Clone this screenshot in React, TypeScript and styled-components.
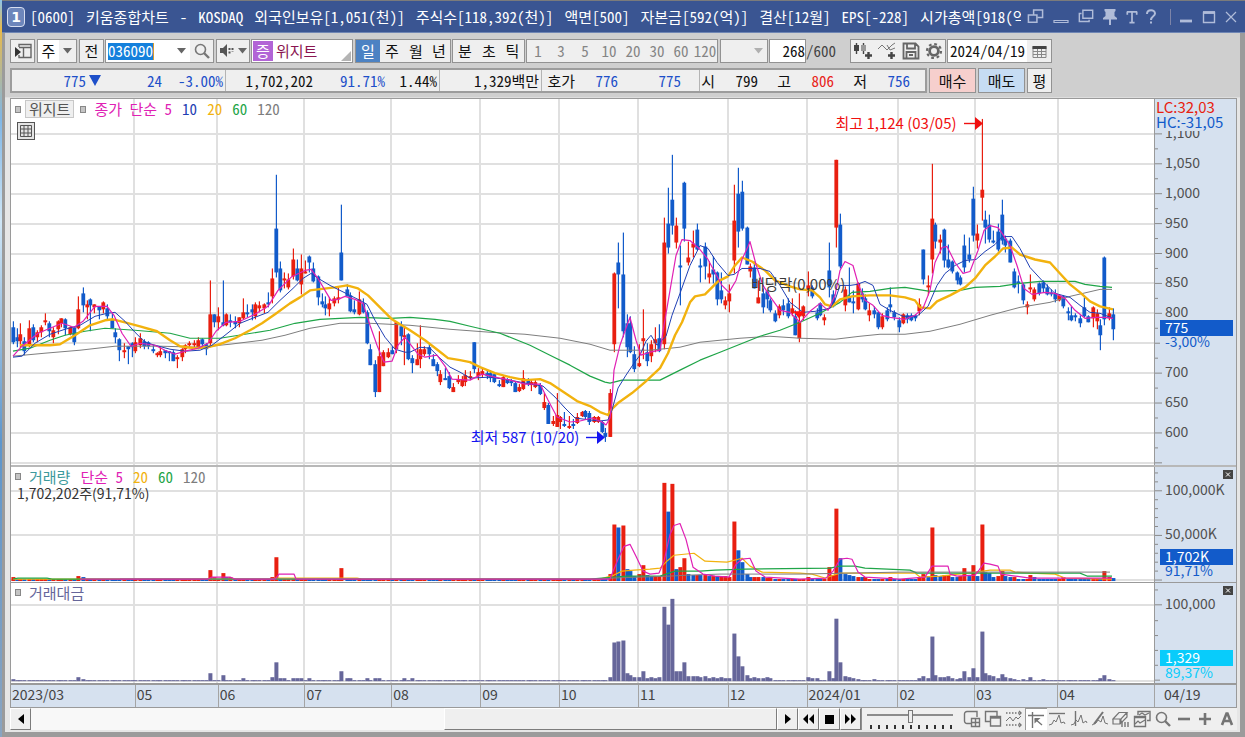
import React from "react";
import styled, { createGlobalStyle, css } from "styled-components";

const SANS = `"Noto Sans CJK KR", sans-serif`;
const MONO = `"Noto Sans Mono CJK KR", "Noto Sans CJK KR", monospace`;

const c = {
  up: "#e81f10",
  down: "#125bca",
  ma5: "#e020b4",
  ma10: "#1f3fb4",
  ma20: "#f2b20e",
  ma60: "#1fa548",
  ma120: "#7d7d7d",
  amount: "#66669a",
  axis: "#d6e1ef",
  line: "#9a9a9a",
  grid: "#e0e0e0",
};

const Global = createGlobalStyle`
  * { box-sizing: border-box; }
  html, body, #root { margin: 0; height: 100%; }
  body { background: #9b9b9b; font: 15px/20px ${MONO}; color: #111; }
  button, input { font: inherit; color: inherit; margin: 0; padding: 0; border-radius: 0; }
`;

/* ---------- window frame ---------- */

const Window = styled.div`
  min-height: 100vh;
  display: flex;
  flex-direction: column;
  padding-left: 2px;
  background: linear-gradient(#8ec4ea, #e9b949 4%, #7fb6e6 16%, #cfe6f6 30%, #5e96cc 60%, #8aa4c0);
`;

const Frame = styled.div`
  flex: 1;
  display: flex;
  flex-direction: column;
  border-top: 1px solid #7b7b7b;
  background: #9b9b9b;
`;

const TitleBar = styled.header`
  display: flex;
  align-items: center;
  height: 32px;
  padding: 0 4px 0 5px;
  background: #3a5592;
  color: #fff;
  border-bottom: 1px solid #6f86b4;
`;

const WindowNumber = styled.span`
  flex: none;
  width: 18px;
  height: 20px;
  margin-right: 5px;
  border: 1px solid #d7def0;
  border-radius: 4px;
  background: #6d86bb;
  font: bold 14px/18px "DejaVu Sans", sans-serif;
  text-align: center;
`;

const TitleText = styled.h1`
  flex: 1 1 0;
  display: flex;
  gap: 11px;
  margin: 0;
  overflow: hidden;
  white-space: nowrap;
  font: 15px/24px ${MONO};
`;

const TitleField = styled.span`
  flex: none;
`;

const TitleButtons = styled.div`
  flex: none;
  display: flex;
  align-items: center;
  margin-left: 6px;
`;

const TitleButton = styled.button<{ $w: number }>`
  display: flex;
  align-items: center;
  justify-content: center;
  width: ${(p) => p.$w}px;
  height: 24px;
  border: 0;
  background: none;
  color: #b0bcd9;
`;

const TitleDivider = styled.span`
  width: 1px;
  height: 16px;
  margin: 0 4px 0 6px;
  background: #7d84a8;
`;

const Body = styled.main`
  flex: 1;
  display: flex;
  flex-direction: column;
  margin: 0 5px 5px 3px;
  padding: 0 3px 2px 5px;
  background: #e6e6e6;
`;

const Controls = styled.div`
  margin: 0 -3px 0 -5px;
  padding: 6px 3px 4px 5px;
  background: #cfcfcf;
  border-bottom: 1px solid #dedede;
`;

/* ---------- toolbar ---------- */

const Toolbar = styled.div`
  display: flex;
  height: 24px;
  margin-bottom: 5px;
`;

const Group = styled.div<{ $gap?: number }>`
  flex: none;
  display: flex;
  margin-right: ${(p) => p.$gap ?? 2}px;
  border: 1px solid #929292;
  background: #efefef;

  & > * + * { border-left: 1px solid #929292; }
`;

const Tool = styled.button<{ $w?: number; $on?: boolean; $white?: boolean }>`
  display: flex;
  align-items: center;
  justify-content: center;
  width: ${(p) => p.$w ?? 24}px;
  border: 0;
  overflow: hidden;
  white-space: nowrap;
  background: ${(p) => (p.$on ? "#4c82c3" : p.$white ? "#fff" : "#efefef")};
  color: ${(p) => (p.$on ? "#fff" : "#111")};

  &:disabled { color: #858585; }
`;

const Field = styled.input<{ $w: number; $align?: string }>`
  width: ${(p) => p.$w}px;
  border: 0;
  outline: 0;
  background: #fff;
  text-align: ${(p) => p.$align ?? "left"};
`;

const CodeBox = styled.label`
  display: flex;
  align-items: center;
  width: 66px;
  padding-left: 2px;
  background: #fff;
`;

const CodeField = styled.input`
  width: 46px;
  height: 17px;
  border: 0;
  outline: 0;
  border-right: 1px solid #d99a2b;
  background: #1480dc;
  color: #fff;
`;

const StockName = styled.div`
  position: relative;
  display: flex;
  align-items: center;
  width: 100px;
  padding-left: 1px;
  background: #fff;
  color: #8a1550;

  &::after {
    content: "";
    position: absolute;
    right: 1px;
    bottom: 1px;
    border: 5px solid;
    border-color: transparent #b4b4b4 #b4b4b4 transparent;
  }
`;

const Badge = styled.span`
  width: 20px;
  margin-right: 3px;
  background: #b264d6;
  color: #fff;
  text-align: center;
`;

const EmptyCell = styled.span`
  width: 29px;
`;

const CountTotal = styled.span`
  width: 44px;
  margin-left: -2px;
  line-height: 24px;
  color: #444;
`;

/* ---------- quote row ---------- */

const QuoteRow = styled.div`
  display: flex;
  height: 25px;
`;

const QuoteBar = styled.div`
  display: flex;
  margin-right: 2px;
  border: 2px solid #9c9c9c;
  background: #efefef;
`;

const QuoteCell = styled.div<{ $w: number }>`
  display: flex;
  align-items: center;
  width: ${(p) => p.$w}px;
  padding-right: 2px;

  & + & { border-left: 1px solid #b4b4b4; }
`;

const Num = styled.span<{ $w: number; $tone?: "down" | "up" }>`
  flex: none;
  width: ${(p) => p.$w}px;
  text-align: right;
  white-space: nowrap;
  color: ${(p) => (p.$tone === "down" ? "#1d4fc9" : p.$tone === "up" ? "#e8241a" : "#111")};
`;

const DownMark = styled.span`
  width: 0;
  margin-left: 3px;
  border: 6px solid transparent;
  border-top: 11px solid #1d4fc9;
  border-bottom: 0;
`;

const OrderButton = styled.button<{ $w: number; $bg?: string }>`
  width: ${(p) => p.$w}px;
  margin-right: 2px;
  border: 1px solid #929292;
  background: ${(p) => p.$bg ?? "#efefef"};
`;

/* ---------- chart ---------- */

const Chart = styled.section`
  flex: 1;
  display: flex;
  flex-direction: column;
  border: 1px solid ${c.line};
  background: #fff;
`;

const Panel = styled.div<{ $grow: number }>`
  flex: ${(p) => p.$grow} 1 0;
  display: flex;
  border-bottom: ${(p) => (p.$grow > 300 ? 2 : 1)}px solid ${(p) => (p.$grow > 300 ? "#b8b8b8" : c.line)};
`;

const Plot = styled.div`
  position: relative;
  flex: 1;

  & > svg { position: absolute; inset: 0; width: 100%; height: 100%; }
`;

const Axis = styled.div`
  position: relative;
  flex: none;
  width: 82px;
  border-left: 1px solid ${c.line};
  background: ${c.axis};

  & > svg { position: absolute; inset: 0; width: 100%; height: 100%; }
`;

const Legend = styled.div`
  position: absolute;
  left: 4px;
  top: 0;
  display: flex;
  align-items: center;
  height: 20px;
`;

const Marker = styled.span`
  width: 6px;
  height: 7px;
  margin: 0 8px 0 0;
  border: 1px solid #888;
  background: #c4c4c4;
`;

const Item = styled.span<{ $color: string; $gap?: number }>`
  margin-right: ${(p) => p.$gap ?? 10}px;
  color: ${(p) => p.$color};
  white-space: nowrap;
`;

const NameButton = styled.button`
  height: 18px;
  margin: 0 6px 0 -4px;
  padding: 0 3px;
  border: 1px solid #c8c8c8;
  background: #efefef;
  color: #555;
  line-height: 16px;
`;

const TableButton = styled.button`
  position: absolute;
  left: 6px;
  top: 23px;
  width: 18px;
  height: 18px;
  border: 1px solid #555;
  background: #e4e4e4;
  display: flex;
  align-items: center;
  justify-content: center;
`;

const Note = styled.div<{ $x: number; $y: number; $color: string }>`
  position: absolute;
  right: ${(p) => 100 - p.$x}%;
  top: ${(p) => p.$y}%;
  display: flex;
  align-items: center;
  gap: 6px;
  height: 18px;
  margin-top: -11px;
  white-space: nowrap;
  font: 15px/18px ${SANS};
  color: ${(p) => p.$color};
`;

const SubNote = styled.div`
  position: absolute;
  left: 6px;
  top: 17px;
  font: 14px/18px ${SANS};
  color: #333;
`;

const Limits = styled.div`
  position: absolute;
  left: 1px;
  right: 0;
  top: 0;
  height: 32px;
  background: ${c.axis};
  font: 15px/15px ${SANS};
`;

const Tag = styled.div<{ $y: number; $bg: string; $ink: string }>`
  position: absolute;
  left: 5px;
  right: 3px;
  top: ${(p) => p.$y}%;
  height: 16px;
  padding-left: 5px;
  background: ${(p) => p.$bg};
  color: ${(p) => p.$ink};
  font: 14px/15px ${SANS};
`;

const CloseBox = styled.button`
  position: absolute;
  right: 3px;
  top: 3px;
  width: 10px;
  height: 9px;
  display: flex;
  border: 0;
  background: #444;
`;

const Limit = styled.div<{ $color: string }>`
  color: ${(p) => p.$color};
`;

const Dates = styled.div`
  display: grid;
  grid-template-columns: 124fr 83fr 87fr 87fr 89fr 79fr 79fr 90fr 79fr 91fr 77fr 83fr 97fr 82px;
  height: 23px;
  background: ${c.axis};
  border-top: 1px solid ${c.line};
`;

const DateCell = styled.span<{ $last?: boolean }>`
  min-width: 0;
  padding-left: ${(p) => (p.$last ? 9 : 1)}px;
  font: 14px/19px ${SANS};
  color: #444;
  white-space: nowrap;

  & + & { border-left: 1px solid #a4a4a4; }
`;

/* ---------- bottom bar ---------- */

const Bottom = styled.footer`
  display: flex;
  align-items: stretch;
  height: 22px;
  background: #efefef;
`;

const raised = css`
  border: 1px solid;
  border-color: #fff #7c7c7c #7c7c7c #fff;
  box-shadow: 1px 0 0 #8f8f8f;
  background: #efefef;
`;

const Step = styled.button`
  flex: none;
  width: 21px;
  ${raised}
  display: flex;
  align-items: center;
  justify-content: center;
`;

const Track = styled.div`
  flex: 413 1 0;
  background: #f8f8f8;
`;

const Thumb = styled.div`
  flex: 332 1 0;
  ${raised}
`;

const Zoom = styled.input`
  flex: none;
  width: 86px;
  height: 22px;
  margin: 0 8px 0 6px;
  appearance: none;
  background:
    linear-gradient(#8c8c8c, #8c8c8c) 0 6px / 100% 2px no-repeat,
    repeating-linear-gradient(90deg, transparent 0 3px, #333 3px 5px, transparent 5px 8px) 0 17px / 100% 4px no-repeat;

  &::-webkit-slider-thumb {
    appearance: none;
    width: 5px;
    height: 13px;
    margin-top: -6px;
    border: 1px solid #777;
    background: #efefef;
  }
`;

const Icons = styled.div`
  flex: 276 0 0;
  max-width: 277px;
  display: flex;
`;

const IconButton = styled.button<{ $on?: boolean }>`
  flex: 1;
  display: flex;
  align-items: center;
  justify-content: center;
  border: ${(p) => (p.$on ? "1px solid #9a9a9a" : "0")};
  border-width: ${(p) => (p.$on ? "1px 0 0 1px" : "0")};
  background: ${(p) => (p.$on ? "#fff" : "none")};
  color: #747474;
`;

/* ---------- data: x, high, body top, body bottom, low, direction ---------- */

const CANDLES = `
13 321 327 342 344 b|17 328 337 341 347 b|20 323 334 341 348 r|24 337 341 351 355 b|29 320 328 345 347 r|33 324 327 340 342 b|37 330 332 337 342 r|41 325 327 332 337 r|45 313 320 322 325 r|49 321 323 331 337 b|53 327 330 337 343 r|58 320 321 329 334 r|61 318 318 323 327 r|65 318 319 328 335 b|70 326 327 334 335 r|74 326 327 342 345 b|78 296 309 328 329 r|83 287 293 305 312 b|87 300 304 307 319 r|90 298 299 305 331 b|94 304 304 307 313 r|99 306 306 310 319 b|103 301 302 309 313 r|107 304 308 316 319 b|112 313 319 328 328 b|115 328 332 337 343 b|119 338 339 350 361 b|124 343 350 352 358 r|128 346 346 349 364 b|132 342 343 347 357 b|135 337 342 351 353 r|140 333 338 345 348 r|144 339 341 346 349 b|148 341 342 346 349 b|153 345 349 351 353 b|157 352 353 355 357 r|160 347 351 355 357 r|165 350 350 353 358 b|169 351 351 353 361 b|173 350 352 361 361 b|177 355 357 359 368 r|182 348 349 357 361 r|185 344 345 349 353 r|189 341 343 345 348 r|194 340 343 345 349 r|198 337 340 347 349 r|202 338 339 344 347 b|206 343 344 349 355 b|210 280 314 343 347 r|214 314 314 322 327 b|218 307 316 322 330 r|223 280 322 325 326 b|226 313 314 325 326 r|230 314 320 322 327 b|235 316 321 324 328 b|239 317 317 323 327 r|243 298 312 318 319 r|247 304 312 314 317 b|252 304 309 312 320 b|255 302 304 316 319 r|259 301 305 308 312 r|264 303 304 308 313 r|268 292 302 304 307 b|272 268 278 296 303 r|276 174 228 272 277 b|280 261 268 290 292 b|284 272 278 280 288 r|288 273 279 287 289 r|293 248 259 276 279 r|297 259 268 280 281 b|301 254 268 284 294 r|305 260 271 273 273 r|309 255 256 262 272 b|313 262 268 281 282 b|318 275 276 297 305 b|322 293 301 304 307 b|325 296 304 308 315 b|329 297 303 309 316 r|334 296 298 303 306 r|338 287 297 299 303 r|341 204 252 280 280 b|347 284 289 296 296 b|350 292 295 311 312 b|354 300 309 312 314 b|359 291 299 314 315 r|363 298 303 312 313 b|367 310 312 343 344 b|370 344 349 365 365 b|375 360 364 392 397 b|379 331 356 392 392 r|383 350 352 366 366 r|388 348 352 357 358 r|392 346 350 354 354 b|396 322 322 349 353 r|401 321 326 336 345 b|404 326 335 337 365 r|408 333 334 359 360 b|412 355 358 363 373 b|417 343 359 365 365 r|420 325 349 359 368 r|424 346 349 354 356 r|429 344 347 354 359 b|433 354 359 366 366 b|437 362 364 371 376 b|440 370 374 382 385 r|445 368 378 379 380 b|449 372 376 388 389 b|453 383 387 392 392 r|458 375 379 382 384 r|462 376 379 386 387 r|465 370 375 382 386 r|470 371 376 378 380 r|474 342 342 369 373 b|478 368 372 376 380 r|482 367 371 374 377 r|487 369 373 376 379 b|490 370 373 378 382 b|494 372 374 382 383 b|499 380 384 386 387 b|503 375 377 387 387 r|507 378 379 383 384 b|511 379 381 383 386 b|515 381 383 392 392 b|519 384 387 391 392 r|523 370 378 389 390 r|528 378 379 384 386 b|531 380 382 385 391 r|535 380 382 387 388 r|540 383 385 394 395 b|544 393 402 408 410 r|548 403 405 424 424 b|553 416 421 424 426 r|557 393 415 427 427 r|560 416 417 422 429 r|564 412 424 426 427 b|569 416 426 428 429 r|573 419 424 426 429 b|577 413 417 423 424 r|582 411 412 416 417 r|585 410 411 417 420 b|589 411 413 422 425 b|594 416 417 422 423 r|598 416 417 422 423 r|602 421 422 432 433 b|605 428 433 437 442 b|610 389 393 437 437 r|614 272 273 344 352 r|618 242 262 274 308 b|623 232 274 331 337 b|627 314 323 347 357 b|630 316 323 352 353 b|634 346 354 369 372 b|639 344 363 366 367 r|643 309 338 341 359 r|647 343 352 361 366 b|651 340 344 356 362 r|655 327 339 343 352 r|659 324 338 351 352 b|664 217 242 344 349 r|668 187 223 247 253 b|672 154 199 225 234 b|676 217 225 242 248 r|680 245 265 267 305 b|684 181 182 228 241 b|688 241 257 262 265 r|693 230 243 247 257 r|697 223 229 249 250 b|700 258 265 267 282 b|705 242 246 266 279 b|709 261 273 277 283 r|713 256 269 274 283 b|717 271 272 299 305 b|721 272 290 299 303 b|725 296 300 305 309 r|729 284 293 301 312 r|734 184 220 260 273 r|738 167 193 231 247 b|742 180 191 228 230 b|747 226 227 264 264 b|750 263 266 271 277 r|754 261 267 288 288 b|758 280 297 303 303 r|763 288 293 307 313 b|767 290 291 299 308 b|770 298 300 310 312 b|775 310 313 321 322 b|779 304 306 315 318 r|783 299 305 310 315 b|788 298 303 316 318 b|792 298 308 313 316 r|795 310 316 335 335 b|799 293 321 338 342 r|803 305 306 316 320 r|808 271 285 290 296 r|812 285 287 296 298 b|817 308 312 318 320 b|820 302 303 315 316 b|824 314 317 320 325 r|829 242 270 287 297 b|833 290 294 306 307 b|836 159 159 227 247 r|840 213 224 266 268 b|845 286 289 305 311 r|849 267 297 302 302 b|853 290 301 303 313 b|858 282 283 309 310 r|862 288 293 299 302 b|865 294 298 309 310 b|869 303 310 315 321 r|874 306 310 314 318 b|878 311 312 327 329 b|882 313 316 327 329 r|887 307 310 319 321 b|890 287 304 307 312 b|894 310 312 317 320 b|899 317 320 327 332 b|903 313 314 323 324 r|907 313 315 319 323 b|911 313 315 320 321 b|915 314 315 318 321 b|919 298 304 311 315 r|923 249 249 279 284 b|928 275 285 287 295 r|932 163 218 259 273 r|935 222 224 241 248 b|940 234 239 242 253 r|944 228 229 260 267 b|948 244 259 267 268 b|952 260 261 271 273 b|957 271 272 280 284 b|960 275 277 284 285 b|964 234 245 267 272 b|969 237 254 259 262 b|973 186 198 235 241 b|977 224 233 240 248 r|982 118 189 197 220 r|985 210 219 227 243 b|989 214 224 239 242 b|993 230 240 242 243 b|998 223 231 249 251 b|1002 199 214 240 244 b|1005 235 238 245 252 b|1010 238 240 262 262 b|1014 268 271 287 288 b|1018 275 281 283 293 b|1023 283 284 300 304 b|1027 301 304 307 314 r|1030 274 287 289 292 r|1034 287 289 299 301 r|1039 282 283 293 295 b|1043 280 282 288 292 b|1047 284 287 294 295 b|1051 289 292 294 296 b|1055 289 293 299 302 b|1059 294 295 300 301 r|1063 295 296 306 308 b|1068 307 311 313 320 b|1071 306 315 320 321 b|1075 313 315 317 321 b|1080 315 318 323 327 b|1084 297 307 316 317 b|1088 315 316 322 322 b|1093 306 307 318 327 r|1097 309 313 321 329 r|1100 319 325 335 350 b|1104 256 257 319 325 b|1109 307 313 318 320 r|1113 308 314 329 340 b`
  .trim()
  .split("|")
  .map((row) => {
    const [x, high, top, bottom, low, dir] = row.trim().split(" ");
    return { x: +x, high: +high, top: +top, bottom: +bottom, low: +low, color: dir === "r" ? c.up : c.down };
  });

const table = (text: string) =>
  Object.fromEntries(
    text.split(" ").map((pair) => {
      const [x, rest] = pair.split(":");
      return [x, rest];
    }),
  ) as Record<string, string>;

/* x:top of each volume bar, with its direction */
const VOLUME = table(
  "13:578r 78:577r 83:578b 210:571r 214:578r 223:574r 226:578b 230:578r 272:578r 276:558r 341:569r 610:575r 614:525r 618:528b 623:526r 627:570b 630:572b 634:577b 639:575r 643:566r 647:576b 651:577b 655:577r 659:577r 664:483r 668:512b 672:484r 676:570b 680:568r 684:559r 688:575b 693:576b 697:576r 700:576b 705:576r 709:577b 713:577r 717:577b 721:577r 725:577r 729:578r 734:522r 738:551b 742:563b 747:575b 750:578b 754:578r 758:578r 763:578b 767:579r 770:579r 808:578r 829:568r 833:576r 836:509r 840:559b 845:575b 849:576b 853:577b 858:578r 862:578b 865:578r 890:578r 919:578r 923:575r 928:577b 932:528r 935:576b 940:577b 944:576r 948:576r 952:578b 957:578b 960:577r 964:569r 969:577b 973:566r 977:577b 982:525r 985:573b 989:574b 993:578b 998:577r 1002:572r 1005:577b 1010:578b 1014:578r 1030:576r 1034:578b 1063:578r 1104:572r 1109:578r 1113:579b",
);

const AMOUNT = table(
  "13:681 78:679 83:681 210:675 223:677 243:680 272:679 276:664 280:680 284:680 293:680 297:680 301:680 309:680 341:673 347:680 350:680 367:680 375:680 379:680 404:680 412:680 610:679 614:644 618:643 623:642 627:675 630:677 634:679 639:679 643:673 647:680 651:679 655:680 659:679 664:608 668:626 672:600 676:673 680:673 684:664 688:678 693:678 697:678 700:679 705:678 709:680 713:679 717:680 721:679 725:680 729:680 734:635 738:658 742:668 747:677 750:680 754:679 758:680 763:680 767:679 770:680 808:679 812:680 817:680 829:673 833:680 836:620 840:664 845:678 849:679 853:680 858:681 874:681 919:680 923:678 928:680 932:638 935:677 940:679 944:679 948:678 952:680 957:681 960:680 964:673 969:679 973:670 977:679 982:633 985:675 989:677 993:678 998:680 1002:676 1005:679 1010:680 1014:681 1023:681 1030:679 1043:681 1100:680 1104:677 1109:681",
);

const MA = {
  ma5: "13,356 22,346 38,333 50,328 62,323 74,327 83,321 95,306 107,306 114,315 122,333 131,346 140,343 155,345 165,350 175,354 185,351 198,348 208,343 216,331 226,322 240,321 255,314 268,306 278,290 292,276 305,270 311,269 318,278 325,290 331,300 338,299 345,296 355,299 363,303 370,325 377,345 384,362 392,361 398,345 405,337 411,345 418,354 425,357 437,355 445,366 452,379 470,380 482,374 495,377 510,380 525,384 540,384 548,400 557,417 570,422 580,421 592,418 602,422 606,425 610,418 612,400 614,370 620,345 627,325 630,317 636,340 641,355 650,352 660,350 664,325 670,290 676,255 682,239 690,240 700,249 708,259 715,272 722,285 729,292 736,280 742,259 748,246 750,241 756,264 763,285 770,296 780,310 790,312 800,322 810,311 820,303 828,310 835,295 840,270 845,261 853,265 858,283 865,300 873,305 882,315 890,317 905,319 915,315 923,308 930,290 935,262 942,247 947,246 955,262 963,273 970,271 978,250 984,230 990,225 998,227 1003,234 1010,245 1017,265 1024,288 1032,294 1045,292 1055,293 1065,298 1075,310 1085,318 1095,317 1105,317 1113,318",
  ma10: "13,357 22,356 35,343 50,334 65,329 80,325 95,316 107,313 115,312 125,321 135,332 145,342 155,345 170,349 185,351 200,350 212,345 225,335 240,323 255,317 268,312 280,300 293,288 303,278 311,273 320,279 330,285 340,290 350,295 360,300 367,304 375,320 385,337 395,349 405,352 410,352 420,347 430,348 440,358 450,367 460,372 470,378 490,377 510,380 530,384 543,386 555,397 565,408 575,418 590,420 600,421 608,420 612,410 618,388 626,375 634,363 640,355 646,341 651,335 657,345 666,336 672,315 680,293 690,265 700,245 708,248 717,262 728,275 734,274 742,268 760,268 770,271 780,285 790,302 803,312 815,311 830,308 835,300 840,285 850,285 857,284 865,281 873,285 880,304 890,310 903,316 917,316 928,306 937,285 945,273 955,265 965,260 976,259 985,251 995,244 1002,236 1012,236 1020,248 1030,267 1042,280 1055,293 1070,297 1080,305 1090,312 1100,313 1113,318",
  ma20: "20,345 30,345 50,345 60,344 75,335 90,325 105,320 113,319 125,322 140,326 157,331 170,340 180,346 195,348 207,347 220,344 235,338 250,330 262,323 275,314 290,303 300,297 310,290 318,289 335,287 347,285 358,288 368,295 380,307 392,319 400,324 410,330 425,340 438,350 448,358 460,360 470,362 480,367 495,373 510,377 525,380 540,379 550,383 565,393 577,401 590,406 600,412 608,415 612,409 618,403 632,393 645,382 660,368 668,353 675,335 682,322 690,302 695,296 705,294 718,281 728,276 735,265 742,257 752,261 765,270 775,280 790,286 800,289 812,290 820,297 825,304 832,306 840,299 852,296 870,295 890,295 905,297 915,300 920,307 930,308 937,301 950,295 965,287 975,278 985,265 995,256 1003,248 1012,247 1020,254 1035,259 1050,262 1060,273 1070,284 1080,292 1090,301 1100,306 1113,309",
  ma60: "13,351 30,348 50,340 65,335 85,331 105,328 135,330 170,333 190,338 220,338 245,334 270,330 295,323 320,319 360,317 390,318 410,317 435,319 450,321 470,326 500,333 530,345 550,355 570,365 590,376 605,382 610,383 622,380 660,380 680,370 700,360 720,352 740,344 760,336 780,330 800,322 820,313 840,302 852,292 870,291 890,288 905,287 930,291 960,290 975,287 1000,286 1020,283 1040,281 1075,281 1085,284 1100,286 1112,287",
  ma120: "13,356 45,353 80,350 115,346 160,346 200,347 230,344 262,340 285,335 310,328 340,323 370,323 410,325 450,329 490,332 525,334 560,338 590,344 610,350 650,350 680,347 700,342 740,338 770,336 800,338 835,339 860,336 880,334 905,334 930,331 960,324 990,315 1020,307 1050,302 1070,296 1100,289 1112,289",
};

const VOLUME_MA = {
  ma20: "13,580 270,580 277,579 357,579 362,580 600,580 614,576 622,572 634,571 650,570 660,569 668,561 674,556 694,554 705,562 727,563 742,559 750,567 762,573 800,574 812,575 825,579 840,574 915,574 920,578 940,577 976,573 990,571 1010,571 1015,573 1030,574 1055,575 1065,579 1112,580",
  ma60: "13,580 18,579 47,579 52,580 590,580 614,578 627,577 660,577 675,572 700,572 715,571 745,570 830,569 840,567 855,567 865,569 910,571 917,574 1080,574 1087,577 1112,577",
  ma120: "120,580 600,580 614,579 670,577 690,576 720,575 800,575 900,573 1110,573",
  ma5: "80,580 208,580 212,578 230,578 235,580 275,580 279,575 294,575 296,580 610,580 618,560 624,547 630,545 636,557 643,572 650,575 659,574 664,562 670,535 674,526 680,524 686,540 693,568 703,575 715,577 729,578 736,565 742,560 750,559 756,572 765,578 800,580 826,579 833,572 840,560 847,559 852,560 858,573 865,578 900,580 925,578 932,567 948,567 950,575 957,577 975,576 979,571 984,564 990,565 998,567 1001,575 1015,577 1030,579 1100,579 1112,579",
};

const MONTHS = [134, 217, 304, 391, 480, 559, 638, 728, 807, 898, 975, 1058];
const DATE_LABELS = ["2023/03", "05", "06", "07", "08", "09", "10", "11", "12", "2024/01", "02", "03", "04"];

/* ---------- chart drawing ---------- */

const Canvas = ({ top, height, rows, children }: { top: number; height: number; rows: number[]; children: React.ReactNode }) => (
  <svg viewBox={`11 ${top} 1143 ${height}`} preserveAspectRatio="none" aria-hidden="true">
    <g fill={c.grid} shapeRendering="crispEdges">
      {MONTHS.map((x) => <rect key={x} x={x - 1} y={top} width="2" height={height} />)}
      {rows.map((y) => <rect key={y} x="11" y={y - 1} width="1143" height="2" />)}
    </g>
    {children}
  </svg>
);

const Line = ({ points, color, width = 1 }: { points: string; color: string; width?: number }) => (
  <polyline points={points} fill="none" stroke={color} strokeWidth={width} strokeLinejoin="round" />
);

type Mark = { y: number; text?: string; minor?: boolean };

const Scale = ({ top, height, marks }: { top: number; height: number; marks: Mark[] }) => (
  <svg>
    {marks.map(({ y, text, minor }) => {
      const at = `${((y - top) / height) * 100}%`;
      return (
        <g key={y}>
          <line x1="0" x2={minor ? 3 : 7} y1={at} y2={at} stroke="#8a8a8a" />
          {text && (
            <text x="10" y={at} dy="4" fill="#505050" fontSize="14" fontFamily={SANS}>{text}</text>
          )}
        </g>
      );
    })}
  </svg>
);

const PRICE_ROWS = [133, 163, 193, 223, 253, 283, 313, 343, 373, 403, 433, 463];
const PRICE_TEXT = ["1,100", "1,050", "1,000", "950", "900", "850", "800", "", "700", "650", "600", ""];
const PRICE_MARKS: Mark[] = PRICE_ROWS.flatMap((y, i) => [
  { y, text: PRICE_TEXT[i] },
  ...(y < 463 ? [{ y: y + 15, minor: true }] : []),
]);
const VOLUME_MARKS: Mark[] = [
  { y: 491, text: "100,000K" },
  { y: 536, text: "50,000K" },
  { y: 581 },
  ...[473, 482, 500, 509, 518, 527, 545, 554, 563, 572].map((y) => ({ y, minor: true })),
];
const AMOUNT_MARKS: Mark[] = [
  { y: 606, text: "100,000" },
  { y: 682 },
  ...[591, 622, 637, 652, 667].map((y) => ({ y, minor: true })),
];

const Close = ({ label }: { label: string }) => (
  <CloseBox aria-label={label}>
    <svg width="10" height="9" viewBox="0 0 10 9"><path d="M3 2.5l4 4M7 2.5l-4 4" stroke="#fff" /></svg>
  </CloseBox>
);

/* ---------- icons ---------- */

const Ico = ({ w = 18, h = 18, sw = 1.4, children }: { w?: number; h?: number; sw?: number; children: React.ReactNode }) => (
  <svg width={w} height={h} viewBox={`0 0 ${w} ${h}`} fill="none" stroke="currentColor" strokeWidth={sw} aria-hidden="true">
    {children}
  </svg>
);

const Caret = ({ color = "#666" }: { color?: string }) => (
  <svg width="9" height="6" viewBox="0 0 9 6" aria-hidden="true"><path d="M0 0h9L4.500 5.500z" fill={color} /></svg>
);

const Magnifier = () => (
  <Ico w={16} h={16} sw={1.6}>
    <circle cx="6.500" cy="6.500" r="5" stroke="#777" />
    <path d="M10 10l5 5" stroke="#777" strokeWidth="2.400" />
  </Ico>
);

const Arrow = () => (
  <Ico w={20} h={14}>
    <path d="M1 7.500h13" />
    <path d="M12 1l8 6.500-8 6.500z" fill="currentColor" stroke="none" />
  </Ico>
);

const bottomIcons: { name: string; on?: boolean; art: React.ReactNode }[] = [
  { name: "새 차트", art: <Ico><path d="M8 13.500H4a2.500 2.500 0 0 1-2.500-2.500V4A2.500 2.500 0 0 1 4 1.500h10V7" /><path d="M8.500 8.500h8v8h-8zM12.500 8.500v8M8.500 12.500h8" /></Ico> },
  { name: "겹쳐보기", art: <Ico><path d="M6 11.500H1.500v-10H13V6" /><path d="M6.500 6.500h10v9.500h-10z" /><path d="M6.500 7.500h10" strokeWidth="2.400" /></Ico> },
  { name: "등락 구간", art: <Ico><path d="M1 3h15M1 15h15" strokeDasharray="1.500 1.500" /><path d="M14 1l2 2-2 2M14 13l2 2-2 2" /><path d="M1 11l4-4 3 4 3-4 2 2 3-3" strokeWidth="1" /></Ico> },
  { name: "십자선", on: true, art: <Ico><path d="M1 4.500h16M5.500 1v16M8 8l7 6" /><path d="M7.500 7h6l-6 5.500z" fill="currentColor" stroke="none" /></Ico> },
  { name: "수평선", art: <Ico><path d="M1 3.500h16" /><path d="M1 15l3-1 2-4 2 2 3-7 2 8 3-1 1 2" strokeWidth="1" /></Ico> },
  { name: "수직선", art: <Ico><path d="M5.500 1v15" /><path d="M1 15l3-1 2-4 2 2 3-7 2 8 3-2 1 2" strokeWidth="1" /></Ico> },
  { name: "추세선", art: <Ico><path d="M3 14L12 2" strokeWidth="2" /><path d="M1 15l4-2 2-3 3 2 2-6 2 7 3 1" strokeWidth="1" /></Ico> },
  { name: "지우기", art: <Ico><path d="M1 9l6-6.500h8L9 9zM1 9v5h7V9M9 9v4l6-6V2.500" strokeWidth="1.200" /><path d="M10 12v5M13 12v5M16 12v5" /></Ico> },
  { name: "차트 저장", art: <Ico><path d="M5 5V1.500h12v9h-3" /><path d="M1.500 6.500h11v10h-11zM1.500 7.500h11" /><path d="M2 14l3-3 2 2 5-3M6 5l3-2 3 2 4-2" strokeWidth="1.200" /></Ico> },
  { name: "돋보기", art: <Magnifier /> },
  { name: "축소", art: <Ico sw={2.6}><path d="M3 9h12" /></Ico> },
  { name: "확대", art: <Ico sw={2.6}><path d="M3 9h12M9 3v12" /></Ico> },
  { name: "자동", art: <Ico sw={2.6}><path d="M4 15L8.500 3.500h1L14 15M5.500 11h7" /></Ico> },
];

export default function App() {
  return (
    <Window>
      <Global />
      <Frame>
        <TitleBar>
          <WindowNumber>1</WindowNumber>
          <TitleText>
            {["[0600]", "키움종합차트", "-", "KOSDAQ", "외국인보유[1,051(천)]", "주식수[118,392(천)]", "액면[500]", "자본금[592(억)]", "결산[12월]", "EPS[-228]", "시가총액[918(억)]"].map((t) => (
              <TitleField key={t}>{t}</TitleField>
            ))}
          </TitleText>
          <TitleButtons>
            <TitleButton $w={17} aria-label="창 분리"><Ico><path d="M7 7V1.500h9.500v8H11" strokeWidth="1.600" /><path d="M1.500 7h9v7.500h-9z" strokeWidth="1.600" /></Ico></TitleButton>
            <TitleButton $w={34} aria-label="숨기기"><Ico><path d="M2 12.500h14v2H2z" strokeWidth="1.200" /></Ico></TitleButton>
            <TitleButton $w={16} aria-label="복제"><Ico><path d="M5.500 1.500h11v9h-11z" strokeWidth="1.600" /><path d="M4 5H1.500v9h11v-2" strokeWidth="1.600" /></Ico></TitleButton>
            <TitleButton $w={32} aria-label="고정"><Ico w={16}><path d="M2.500 1h11v2l-1 1v4l2.500 2v1.500H1V10l2.500-2V4l-1-1z" fill="currentColor" stroke="none" /><path d="M8 11v6" strokeWidth="2" /></Ico></TitleButton>
            <TitleButton $w={12} aria-label="글꼴"><Ico w={14} h={16}><path d="M1 2h12M7 2v12M4 14.500h6M1.500 2v3.500M12.500 2v3.500" strokeWidth="2" /></Ico></TitleButton>
            <TitleButton $w={26} aria-label="도움말"><Ico w={12} h={16}><path d="M2 5c0-5 8-5 8-.500C10 7.500 6 7 6 11M6 12.500v2" strokeWidth="2" /></Ico></TitleButton>
            <TitleDivider />
            <TitleButton $w={22} aria-label="최소화"><Ico w={14}><path d="M1 13h12" strokeWidth="2.800" /></Ico></TitleButton>
            <TitleButton $w={24} aria-label="최대화"><Ico w={14} h={14}><path d="M1.500 2.500h11v10h-11z" /><path d="M1 2.500h12" strokeWidth="2.800" /></Ico></TitleButton>
            <TitleButton $w={20} aria-label="닫기"><Ico w={12} h={12} sw={1.2}><path d="M1 1l10 10M11 1L1 11" /></Ico></TitleButton>
          </TitleButtons>
        </TitleBar>

        <Body>
          <Controls>
            <Toolbar>
              <Group>
                <Tool $w={23} aria-label="종목 목록"><Ico><path d="M5 5V2.500h12v13H5V13M5 5.500h12M9.500 5v10" stroke="#666" /><path d="M1 5l6 5-6 5z" fill="#333" stroke="none" /></Ico></Tool>
              </Group>
              <Group>
                <Tool $w={21} $white>주</Tool>
                <Tool $w={17} aria-label="주식 구분"><Caret /></Tool>
              </Group>
              <Group $gap={1}><Tool $w={23}>전</Tool></Group>
              <Group>
                <CodeBox><CodeField defaultValue="036090" aria-label="종목코드" /></CodeBox>
                <Tool $w={18} aria-label="최근 종목" $white><Caret /></Tool>
                <Tool $w={23} aria-label="종목 검색"><Magnifier /></Tool>
              </Group>
              <Group $gap={1}>
                <Tool $w={19} aria-label="소리"><Ico w={16} h={16}><path d="M1 5h3l4-4v13l-4-4H1z" fill="#555" stroke="none" /><path d="M10.500 5v6M13.500 5v4" stroke="#555" strokeDasharray="2 1.500" strokeWidth="2" /></Ico></Tool>
                <Tool $w={13} aria-label="소리 설정"><Caret /></Tool>
              </Group>
              <Group><StockName><Badge>증</Badge>위지트</StockName></Group>
              <Group $gap={1}>
                <Tool $on>일</Tool><Tool>주</Tool><Tool>월</Tool><Tool $w={22}>년</Tool>
              </Group>
              <Group $gap={1}>
                <Tool>분</Tool><Tool>초</Tool><Tool $w={23}>틱</Tool>
              </Group>
              <Group>
                {["1", "3", "5", "10", "20", "30", "60", "120"].map((n) => <Tool key={n} disabled $w={n === "1" ? 22 : 24}>{n}</Tool>)}
              </Group>
              <Group $gap={1}>
                <EmptyCell />
                <Tool $w={17} disabled aria-label="간격"><Caret color="#b0b0b0" /></Tool>
              </Group>
              <Group><Field $w={35} $align="right" defaultValue="268" aria-label="봉 개수" /></Group>
              <CountTotal>/600</CountTotal>
              <Group $gap={1}>
                <Tool aria-label="차트 형태"><Ico w={20}><path d="M3.500 1v11M10.500 1v11" stroke="#444" /><path d="M1 3h5v6H1z" fill="#444" stroke="none" /><path d="M8 3h5v6H8z" fill="#999" stroke="none" /><path d="M12 13.500h7M15.500 10v7" stroke="#444" strokeWidth="2.400" /></Ico></Tool>
                <Tool aria-label="지표 추가"><Ico w={20}><path d="M1 7l4-4 5 5 5-5 3-2M10 3l3 5 5-2" stroke="#777" strokeWidth="1" /><path d="M11 13.500h7M14.500 10v7" stroke="#444" strokeWidth="2.400" /></Ico></Tool>
                <Tool aria-label="저장"><Ico sw={1.8}><path d="M1.500 1.500h12l3 3v12h-15zM5 1.500v5h8v-5M4.500 16v-6h9v6M7 13h4" stroke="#666" /></Ico></Tool>
                <Tool $w={22} aria-label="설정"><Ico><circle cx="9" cy="9" r="4.400" stroke="#666" strokeWidth="2.800" /><circle cx="9" cy="9" r="7" stroke="#666" strokeWidth="2.200" strokeDasharray="2.750 2.750" /></Ico></Tool>
              </Group>
              <Group>
                <Field $w={79} $align="center" defaultValue="2024/04/19" aria-label="조회일" />
                <Tool $w={24} aria-label="달력"><Ico w={15} h={15} sw={1}><path d="M1 2.500h13v11H1zM1 7.500h13M1 10.500h13M5.500 5v8M9.500 5v8" stroke="#888" /><path d="M.500 3.500h14" stroke="#444" strokeWidth="3" /></Ico></Tool>
              </Group>
            </Toolbar>

            <QuoteRow>
              <QuoteBar>
                <QuoteCell $w={213}>
                  <Num $w={74} $tone="down">775</Num><DownMark />
                  <Num $w={61} $tone="down">24</Num><Num $w={61} $tone="down">-3.00%</Num>
                </QuoteCell>
                <QuoteCell $w={214}><Num $w={87}>1,702,202</Num><Num $w={72} $tone="down">91.71%</Num><Num $w={52}>1.44%</Num></QuoteCell>
                <QuoteCell $w={102}><Num $w={99}>1,329백만</Num></QuoteCell>
                <QuoteCell $w={158}><Num $w={33}>호가</Num><Num $w={43} $tone="down">776</Num><Num $w={63} $tone="down">775</Num></QuoteCell>
                <QuoteCell $w={226}>
                  <Num $w={15}>시</Num><Num $w={43}>799</Num><Num $w={33}>고</Num><Num $w={43} $tone="up">806</Num>
                  <Num $w={33}>저</Num><Num $w={43} $tone="down">756</Num>
                </QuoteCell>
              </QuoteBar>
              <OrderButton $w={47} $bg="#f6cfcd">매수</OrderButton>
              <OrderButton $w={47} $bg="#c6dcf3">매도</OrderButton>
              <OrderButton $w={25}>평</OrderButton>
            </QuoteRow>
          </Controls>

          <Chart>
            <Panel $grow={369}>
              <Plot>
                <Canvas top={98} height={367} rows={PRICE_ROWS}>
                  {CANDLES.map((k) => (
                    <g key={k.x} fill={k.color}>
                      <rect x={k.x - 0.2} y={k.high} width="1.2" height={k.low - k.high} />
                      <rect x={k.x - 1.6} y={k.top} width="3.8" height={Math.max(2, k.bottom - k.top)} />
                    </g>
                  ))}
                  <Line points={MA.ma120} color={c.ma120} />
                  <Line points={MA.ma60} color={c.ma60} width={1.2} />
                  <Line points={MA.ma20} color={c.ma20} width={2.4} />
                  <Line points={MA.ma10} color={c.ma10} />
                  <Line points={MA.ma5} color={c.ma5} width={1.2} />
                  <path d="M793 311h12l-6 7z" fill="#f11" />
                </Canvas>
                <Legend>
                  <Marker /><NameButton>위지트</NameButton><Marker />
                  <Item $color={c.ma5}>종가 단순 5</Item>
                  <Item $color={c.ma10}>10</Item>
                  <Item $color={c.ma20}>20</Item>
                  <Item $color={c.ma60}>60</Item>
                  <Item $color={c.ma120}>120</Item>
                </Legend>
                <TableButton aria-label="데이터 표"><Ico w={12} h={12} sw={1}><path d="M.500.500h11v11H.500zM.500 4h11M.500 8h11M4 .500v11M8 .500v11" stroke="#555" /></Ico></TableButton>
                <Note $x={85} $y={7} $color="#f01010">최고 1,124 (03/05)<Arrow /></Note>
                <Note $x={52} $y={93} $color="#1414f0">최저 587 (10/20)<Arrow /></Note>
                <Note $x={73} $y={51} $color="#3a3a3a">배당락(0,00%)</Note>
              </Plot>
              <Axis>
                <Scale top={98} height={367} marks={PRICE_MARKS} />
                <Limits>
                  <Limit $color={c.up}>LC:32,03</Limit>
                  <Limit $color={c.down}>HC:-31,05</Limit>
                </Limits>
                <Tag $y={64.300} $bg={c.axis} $ink={c.down}>-3,00%</Tag>
                <Tag $y={60.300} $bg={c.down} $ink="#fff">775</Tag>
              </Axis>
            </Panel>

            <Panel $grow={116}>
              <Plot>
                <Canvas top={467} height={116} rows={[491, 536, 581]}>
                  {CANDLES.map((k) => {
                    const bar = VOLUME[k.x];
                    const top = bar ? parseInt(bar, 10) : 580;
                    const fill = bar ? (bar.endsWith("r") ? c.up : c.down) : k.color;
                    return <rect key={k.x} x={k.x - 1.6} y={top} width="4" height={582 - top} fill={fill} />;
                  })}
                  <Line points={VOLUME_MA.ma20} color={c.ma20} width={1.2} />
                  <Line points={VOLUME_MA.ma60} color={c.ma60} width={1.2} />
                  <Line points={VOLUME_MA.ma120} color={c.ma120} />
                  <Line points={VOLUME_MA.ma5} color={c.ma5} width={1.2} />
                </Canvas>
                <Legend>
                  <Marker />
                  <Item $color="#3d9a9c">거래량</Item>
                  <Item $color={c.ma5}>단순 5</Item>
                  <Item $color={c.ma20}>20</Item>
                  <Item $color={c.ma60}>60</Item>
                  <Item $color={c.ma120}>120</Item>
                </Legend>
                <SubNote>1,702,202주(91,71%)</SubNote>
              </Plot>
              <Axis>
                <Scale top={467} height={116} marks={VOLUME_MARKS} />
                <Tag $y={84} $bg={c.axis} $ink={c.down}>91,71%</Tag>
                <Tag $y={71} $bg={c.down} $ink="#fff">1,702K</Tag>
                <Close label="거래량 닫기" />
              </Axis>
            </Panel>

            <Panel $grow={101}>
              <Plot>
                <Canvas top={584} height={101} rows={[606, 683]}>
                  <g fill={c.amount}>
                    {CANDLES.map((k) => {
                      const top = +(AMOUNT[k.x] ?? 682);
                      return <rect key={k.x} x={k.x - 1.6} y={top} width="4" height={683 - top} />;
                    })}
                  </g>
                </Canvas>
                <Legend><Marker /><Item $color={c.amount}>거래대금</Item></Legend>
              </Plot>
              <Axis>
                <Scale top={584} height={101} marks={AMOUNT_MARKS} />
                <Tag $y={82} $bg={c.axis} $ink="#08ccfb">89,37%</Tag>
                <Tag $y={67} $bg="#08ccfb" $ink="#fff">1,329</Tag>
                <Close label="거래대금 닫기" />
              </Axis>
            </Panel>

            <Dates>
              {DATE_LABELS.map((d) => <DateCell key={d}>{d}</DateCell>)}
              <DateCell $last>04/19</DateCell>
            </Dates>
          </Chart>

          <Bottom>
            <Step aria-label="왼쪽"><svg width="6" height="10" viewBox="0 0 6 10"><path d="M6 0v10L0 5z" /></svg></Step>
            <Track />
            <Thumb />
            <Step aria-label="오른쪽"><svg width="6" height="10" viewBox="0 0 6 10"><path d="M0 0v10l6-5z" /></svg></Step>
            <Step aria-label="뒤로"><svg width="11" height="10" viewBox="0 0 11 10"><path d="M5 0v10L0 5zM11 0v10L6 5z" /></svg></Step>
            <Step aria-label="정지"><svg width="9" height="9"><path d="M0 0h9v9H0z" /></svg></Step>
            <Step aria-label="앞으로"><svg width="11" height="10" viewBox="0 0 11 10"><path d="M0 0v10l5-5zM6 0v10l5-5z" /></svg></Step>
            <Zoom type="range" min={0} max={10} defaultValue={5} aria-label="확대 비율" />
            <Icons>
              {bottomIcons.map((b) => <IconButton key={b.name} $on={b.on} aria-label={b.name}>{b.art}</IconButton>)}
            </Icons>
          </Bottom>
        </Body>
      </Frame>
    </Window>
  );
}
